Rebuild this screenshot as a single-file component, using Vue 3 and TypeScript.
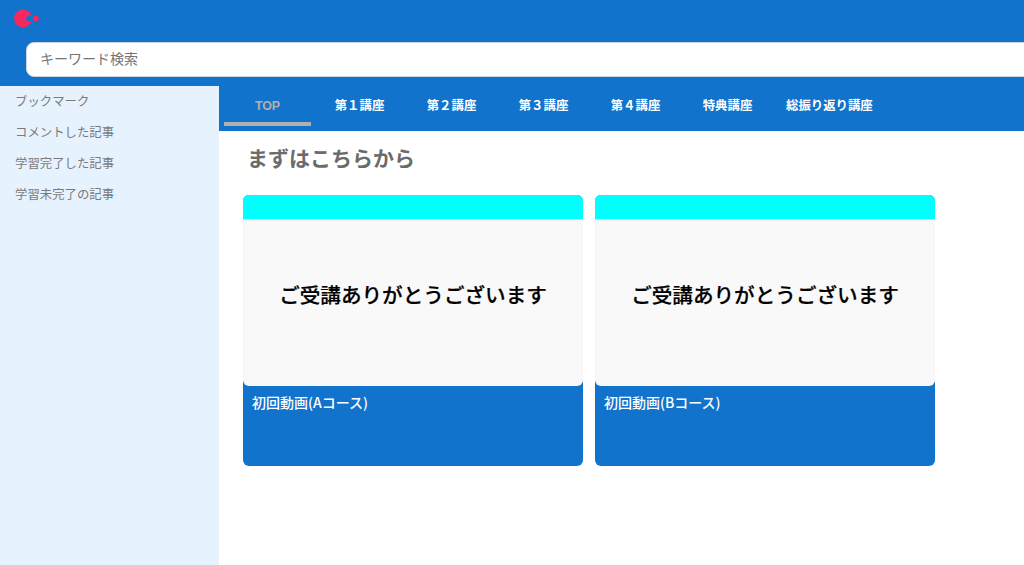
<template>
  <div class="page">
    <header class="header">
      <div class="logo-row">
        <svg class="logo" width="26" height="20" viewBox="0 0 26 20" aria-label="logo">
          <circle cx="9" cy="9.5" r="9" fill="#f4295f" />
          <circle cx="15.2" cy="9.5" r="3" fill="#1173cc" />
          <circle cx="21.8" cy="9.5" r="3" fill="#f4295f" />
        </svg>
      </div>
      <div class="search">キーワード検索</div>
    </header>

    <div class="body">
      <aside class="sidebar">
        <a v-for="item in sideItems" :key="item" class="side-item">{{ item }}</a>
      </aside>

      <main class="main">
        <nav class="tabs">
          <a
            v-for="(tab, index) in tabs"
            :key="tab"
            class="tab"
            :class="{ active: index === 0 }"
          >{{ tab }}</a>
        </nav>

        <section class="content">
          <h2 class="title">まずはこちらから</h2>
          <div class="cards">
            <article v-for="card in cards" :key="card" class="card">
              <div class="card-top"></div>
              <div class="thumb">ご受講ありがとうございます</div>
              <p class="caption">{{ card }}</p>
            </article>
          </div>
        </section>
      </main>
    </div>
  </div>
</template>

<script setup lang="ts">
const sideItems: string[] = [
  "ブックマーク",
  "コメントした記事",
  "学習完了した記事",
  "学習未完了の記事",
];

const tabs: string[] = [
  "TOP",
  "第１講座",
  "第２講座",
  "第３講座",
  "第４講座",
  "特典講座",
  "総振り返り講座",
];

const cards: string[] = ["初回動画(Aコース)", "初回動画(Bコース)"];
</script>

<style>
html,
body {
  margin: 0;
  background: #fff;
  overflow: hidden;
}
</style>

<style scoped>
.page {
  width: 1024px;
  height: 565px;
  display: flex;
  flex-direction: column;
  overflow: hidden;
  font-family: "Liberation Sans", "Noto Sans CJK JP", sans-serif;
}

.header {
  height: 86px;
  flex: none;
  background: #1173cc;
  display: flex;
  flex-direction: column;
  padding-left: 26px;
  box-sizing: border-box;
}

.logo-row {
  height: 42px;
  flex: none;
  margin-left: -12px;
  padding-top: 9px;
  box-sizing: border-box;
}

.logo {
  display: block;
}

.search {
  width: 1020px;
  height: 35px;
  flex: none;
  box-sizing: border-box;
  padding-left: 13px;
  background: #fff;
  border: 1px solid #c9d6e2;
  border-radius: 8px;
  color: #757575;
  font-size: 14px;
  line-height: 33px;
}

.body {
  flex: 1;
  display: flex;
  min-height: 0;
}

.sidebar {
  width: 219px;
  flex: none;
  background: #e6f2fe;
  display: flex;
  flex-direction: column;
  gap: 11px;
  padding: 6px 0 0 15px;
  box-sizing: border-box;
}

.side-item {
  height: 20px;
  line-height: 20px;
  font-size: 12.4px;
  color: #7a7a7a;
}

.main {
  flex: 1;
  min-width: 0;
  display: flex;
  flex-direction: column;
}

.tabs {
  height: 45px;
  flex: none;
  background: #1173cc;
  display: flex;
  gap: 5px;
  padding-left: 5px;
}

.tab {
  min-width: 87px;
  height: 40px;
  box-sizing: border-box;
  padding: 0 10px;
  text-align: center;
  line-height: 40px;
  font-size: 12.4px;
  font-weight: 700;
  color: #fff;
}

.tab.active {
  color: #b0b0b0;
  border-bottom: 4px solid #b0b0b0;
}

.content {
  padding: 0 24px;
}

.title {
  margin: 0;
  padding-left: 4px;
  height: 64px;
  box-sizing: border-box;
  padding-top: 14px;
  font-size: 21px;
  line-height: 28px;
  font-weight: 700;
  color: #6b6b6b;
}

.cards {
  display: flex;
  gap: 12px;
}

.card {
  width: 340px;
  height: 271px;
  background: #1173cc;
  border-radius: 6px;
  overflow: hidden;
}

.card-top {
  height: 24px;
  background: #00ffff;
}

.thumb {
  height: 167px;
  box-sizing: border-box;
  padding-bottom: 17px;
  background: #f9f9f9;
  border-radius: 0 0 6px 6px;
  box-shadow: inset 0 1px 1px #e0e0e0;
  display: flex;
  align-items: center;
  justify-content: center;
  font-size: 20.6px;
  font-weight: 500;
  color: #000;
  -webkit-text-stroke: 0.2px #000;
}

.caption {
  margin: 0;
  padding: 6px 9px;
  font-family: "Noto Sans CJK JP", sans-serif;
  font-size: 14px;
  line-height: 21px;
  font-weight: 500;
  color: #fff;
}
</style>
